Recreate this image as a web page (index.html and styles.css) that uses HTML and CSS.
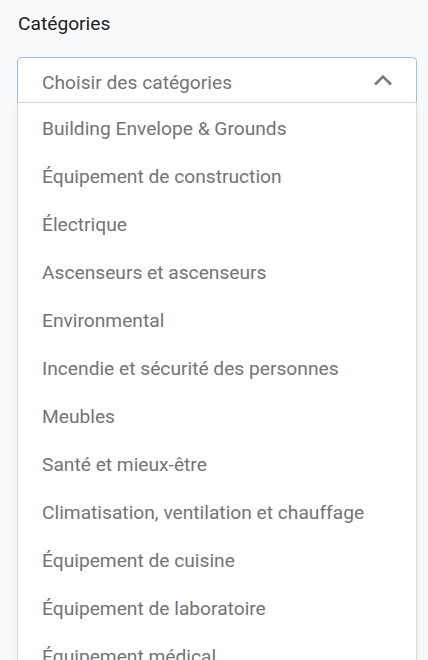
FILE: index.html
```html
<!DOCTYPE html>
<html lang="fr">
<head>
<meta charset="utf-8">
<link rel="stylesheet" href="styles.css">
</head>
<body>
<div class="field">
  <div class="label">Catégories</div>
  <div class="select">
    <div class="control">
      <span class="placeholder">Choisir des catégories</span>
      <svg class="chevron" width="20" height="12" viewBox="0 0 20 12"><polyline points="2,10.5 10,2.5 18,10.5" fill="none" stroke="#7a7a7a" stroke-width="2.6"/></svg>
    </div>
    <ul class="menu">
      <li>Building Envelope &amp; Grounds</li>
      <li>Équipement de construction</li>
      <li>Électrique</li>
      <li>Ascenseurs et ascenseurs</li>
      <li>Environmental</li>
      <li>Incendie et sécurité des personnes</li>
      <li>Meubles</li>
      <li>Santé et mieux-être</li>
      <li>Climatisation, ventilation et chauffage</li>
      <li>Équipement de cuisine</li>
      <li>Équipement de laboratoire</li>
      <li>Équipement médical</li>
    </ul>
  </div>
</div>
</body>
</html>
```
FILE: styles.css
```css
html, body {
  margin: 0;
  padding: 0;
  height: 100%;
  overflow: hidden;
  background: #f8f9fb;
  font-family: Roboto, "Noto Sans", sans-serif;
}
.field {
  padding: 12px 12px 0 17px;
}
.label {
  font-size: 19.2px;
  color: #222;
  line-height: 24px;
  margin-left: 1px;
}
.select {
  margin-top: 21px;
  width: 400px;
}
.control {
  box-sizing: border-box;
  height: 46px;
  background: #fff;
  border: 1px solid #8cc4f5;
  border-bottom: 1px solid #d4d4d4;
  border-radius: 5px 5px 0 0;
  display: flex;
  align-items: center;
  justify-content: space-between;
  padding: 0 23px 0 24px;
}
.placeholder {
  font-size: 19.2px;
  color: #747474;
  padding-top: 4px;
}
.chevron {
  display: block;
  margin-top: 0;
}
.menu {
  list-style: none;
  margin: 0;
  padding: 0;
  background: #fff;
  border: 1px solid #dcdcdc;
  border-top: none;
  box-shadow: 0 2px 4px rgba(0,0,0,0.08);
}
.menu li {
  height: 44px;
  padding-top: 4px;
  line-height: 44px;
  padding-left: 24px;
  font-size: 19.2px;
  color: #747474;
  white-space: nowrap;
}
```
